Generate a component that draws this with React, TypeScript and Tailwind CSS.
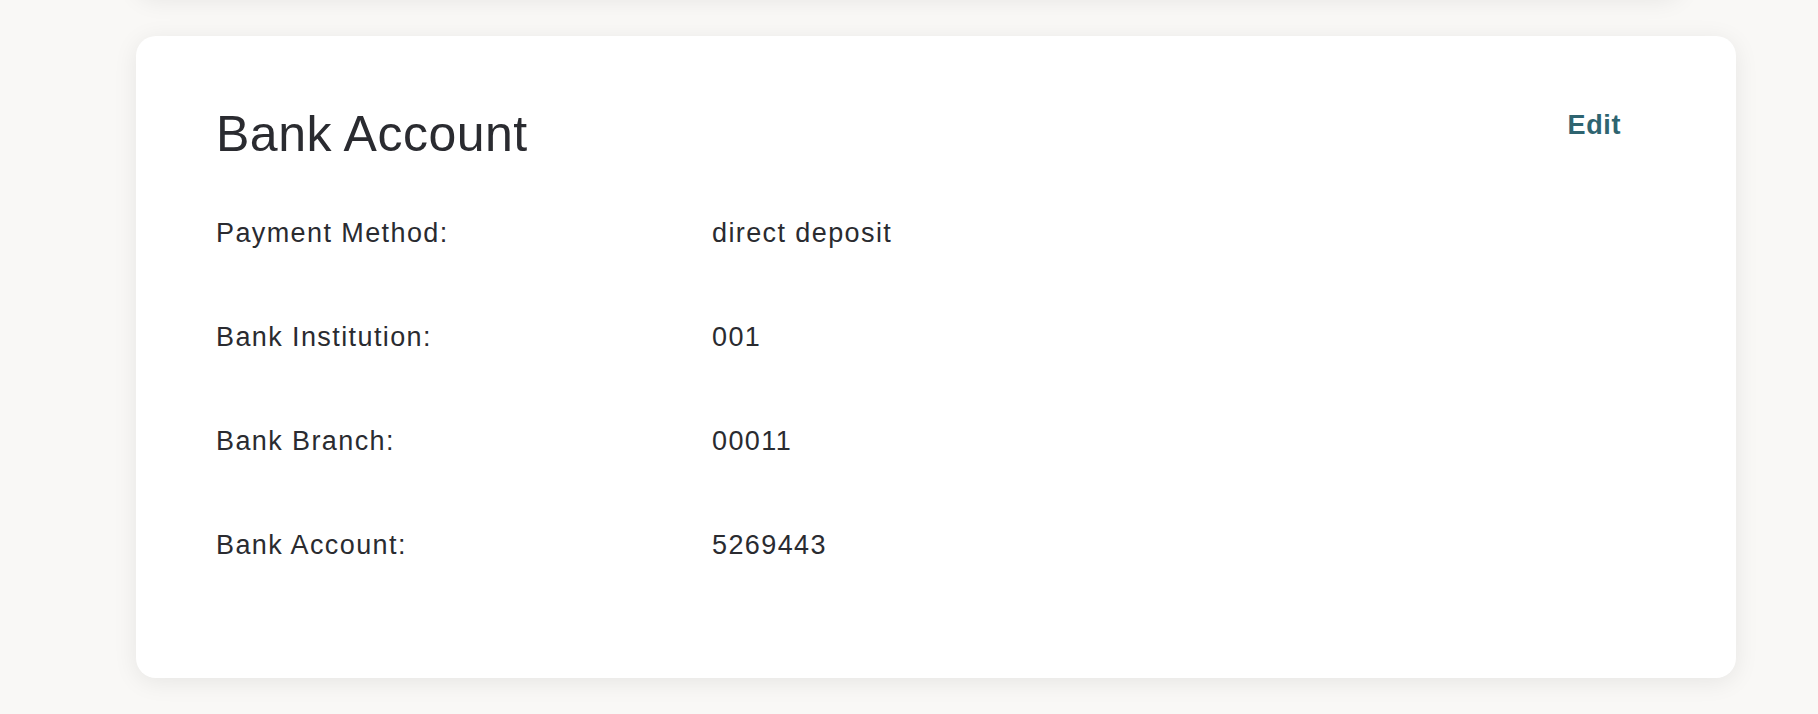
const rows = [
  { label: "Payment Method:", value: "direct deposit" },
  { label: "Bank Institution:", value: "001" },
  { label: "Bank Branch:", value: "00011" },
  { label: "Bank Account:", value: "5269443" },
];

export default function App() {
  return (
    <div className="min-h-screen overflow-hidden bg-[#f9f8f6] px-[136px] font-['Liberation_Sans',Arial,sans-serif] text-[#2a2b30]">
      {/* previous card, mostly scrolled out of view */}
      <div className="-mt-[204px] h-[200px] rounded-[20px] bg-white shadow-[0_4px_24px_rgba(0,0,0,0.08)]"></div>

      <section className="mt-[40px] flex h-[642px] w-[1600px] rounded-[20px] bg-white pt-[68px] pl-[80px] pr-[115px] shadow-[0_4px_24px_rgba(0,0,0,0.08)]">
        <div className="flex-1">
          <h2 className="text-[50px] leading-[60px] font-normal tracking-[0.5px]">Bank Account</h2>
          <div className="mt-[51px] flex flex-col gap-[68px]">
            {rows.map((r) => (
              <div key={r.label} className="grid grid-cols-[496px_1fr] text-[27px] leading-[36px] tracking-[1.4px]">
                <span>{r.label}</span>
                <span>{r.value}</span>
              </div>
            ))}
          </div>
        </div>
        <button className="mt-[3px] h-[36px] text-[27px] leading-[36px] font-bold tracking-[0.6px] text-[#2e6470]">
          Edit
        </button>
      </section>
    </div>
  );
}
